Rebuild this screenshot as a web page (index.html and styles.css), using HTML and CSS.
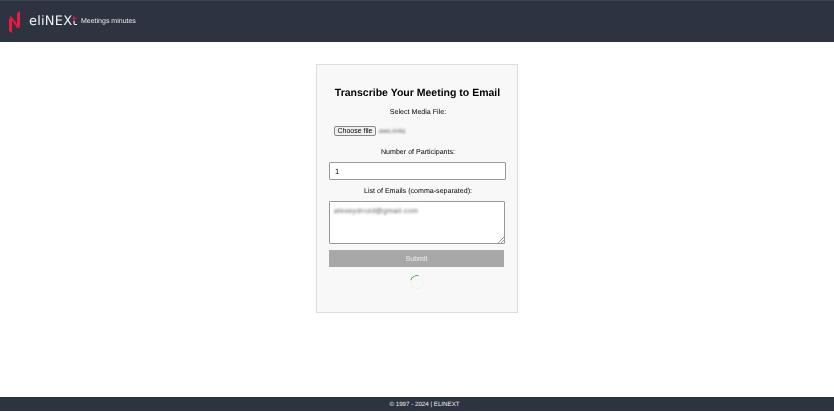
FILE: index.html
```html
<!DOCTYPE html>
<html lang="en">
<head>
    <meta charset="UTF-8">
    <meta name="viewport" content="width=device-width, initial-scale=1.0">
    <title>Meetings minutes</title>
    <link rel="stylesheet" href="styles.css">
</head>
<body>
    <header class="header">
        <svg class="logo-mark" width="12" height="22" viewBox="0 0 12 22">
            <path d="M0 8 L3 6 L3 22 L0 20 Z" fill="#ee1c40"/>
            <path d="M0 5 L3 6 L11 17 L8 17 Z" fill="#e01a3c"/>
            <path d="M8 2 L11 0 L11 16 L8 14 Z" fill="#ee1c40"/>
        </svg>
        <span class="logo-text">eliNEX<span class="logo-end">t</span></span>
        <span class="app-name">Meetings minutes</span>
    </header>

    <main class="main">
        <form class="card">
            <h1>Transcribe Your Meeting to Email</h1>
            <label class="label">Select Media File:</label>
            <div class="file-row">
                <button type="button" class="file-button">Choose file</button>
                <span class="file-name">aws.m4a</span>
            </div>
            <label class="label label-participants">Number of Participants:</label>
            <div class="number-input">1</div>
            <label class="label label-emails">List of Emails (comma-separated):</label>
            <div class="email-box">
                <span class="email-text">alexeydrozd@gmail.com</span>
                <svg class="resize-grip" width="7" height="7" viewBox="0 0 7 7">
                    <path d="M1 7 L7 1 M4 7 L7 4" stroke="#999" stroke-width="1"/>
                </svg>
            </div>
            <button type="button" class="submit">Submit</button>
            <div class="spinner"></div>
        </form>
    </main>

    <footer class="footer">© 1997 - 2024 | ELINEXT</footer>
</body>
</html>
```

FILE: styles.css
```css
* {
    margin: 0;
    padding: 0;
    box-sizing: border-box;
}

body {
    font-family: "Liberation Sans", Arial, sans-serif;
    text-rendering: geometricPrecision;
    background: #fff;
    color: #111;
    height: 412px;
    overflow: hidden;
    display: flex;
    flex-direction: column;
}

.header {
    height: 42px;
    background: #2d3340;
    border-top: 1px solid #3c4250;
    display: flex;
    align-items: center;
    padding-left: 9px;
    color: #fff;
}

.logo-mark {
    margin-right: 8px;
}

.logo-text {
    font-family: "DejaVu Sans", sans-serif;
    font-size: 13px;
    letter-spacing: 0.2px;
    width: 52px;
    color: #f1f1f1;
    filter: blur(0.25px);
}

.logo-end {
    background: linear-gradient(#ee1c40 45%, #f1f1f1 45%);
    -webkit-background-clip: text;
    background-clip: text;
    color: transparent;
}

.app-name {
    font-size: 7px;
    color: #e8e8e8;
    filter: blur(0.25px);
}

.main {
    flex: 1;
    padding-top: 22px;
}

.card {
    width: 202px;
    height: 249px;
    margin-left: 316px;
    background: #f8f8f8;
    border: 1px solid #ddd;
    padding: 22px 10px 0 12px;
    display: flex;
    flex-direction: column;
    align-items: center;
    filter: blur(0.25px);
}

h1 {
    font-size: 10.5px;
    font-weight: bold;
    color: #000;
    line-height: 13px;
    margin-left: -1px;
    margin-bottom: 7px;
    white-space: nowrap;
}

.label {
    font-size: 7.1px;
    line-height: 10px;
    text-align: center;
    color: #000;
}

.file-row {
    align-self: flex-start;
    display: flex;
    align-items: center;
    margin: 9px 0 0 5px;
    height: 10px;
}

.file-button {
    width: 42px;
    height: 10px;
    font-family: inherit;
    font-size: 7px;
    line-height: 8px;
    white-space: nowrap;
    background: #efefef;
    border: 1px solid #888;
    border-radius: 2px;
    color: #000;
}

.file-name {
    font-size: 6.5px;
    margin-left: 3px;
    color: #555;
    filter: blur(1.2px);
}

.label-participants {
    margin-top: 11px;
}

.number-input {
    align-self: flex-start;
    width: 177px;
    height: 18px;
    margin-top: 5px;
    background: #fff;
    border: 1px solid #999;
    border-radius: 1px;
    font-size: 7.5px;
    line-height: 17px;
    padding-left: 5px;
    color: #000;
}

.label-emails {
    margin-top: 6px;
}

.email-box {
    position: relative;
    align-self: flex-start;
    width: 176px;
    height: 43px;
    margin-top: 5px;
    background: #fff;
    border: 1px solid #999;
    border-radius: 1px;
    padding: 5px 4px;
    font-size: 7px;
    line-height: 10px;
    letter-spacing: 0.35px;
    color: #555;
}

.email-text {
    filter: blur(1.2px);
    display: inline-block;
}

.resize-grip {
    position: absolute;
    right: 0;
    bottom: 0;
}

.submit {
    align-self: flex-start;
    width: 175px;
    height: 17px;
    margin-top: 6px;
    background: #a8a8a8;
    border: none;
    color: #f0f0f0;
    font-family: inherit;
    font-size: 7px;
}

.spinner {
    width: 14px;
    height: 14px;
    margin-top: 8px;
    margin-left: -2px;
    border: 1.5px solid #f0f0f0;
    border-top-color: #4caf50;
    border-radius: 50%;
    transform: rotate(-30deg);
}

.footer {
    height: 14px;
    margin-bottom: 1px;
    padding-left: 15px;
    background: #2d3340;
    color: #eee;
    font-size: 6.2px;
    line-height: 16px;
    text-align: center;
}
```
